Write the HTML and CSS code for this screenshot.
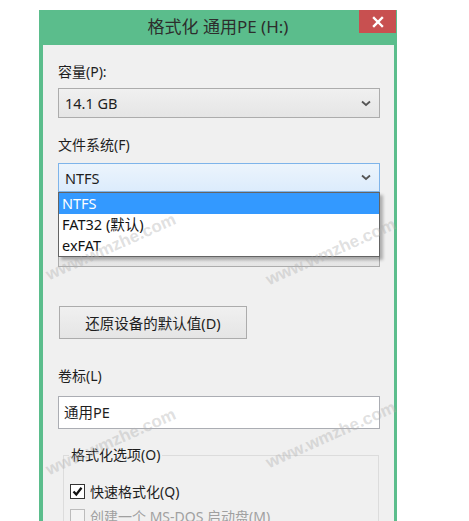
FILE: index.html
```html
<!DOCTYPE html>
<html lang="zh-CN">
<head>
<meta charset="utf-8">
<title>格式化 通用PE (H:)</title>
<link rel="stylesheet" href="styles.css">
</head>
<body>
<div class="window">
  <div class="titlebar">
    <div class="title">格式化 通用PE (H:)</div>
    <div class="close">
      <svg width="12" height="12" viewBox="0 0 12 12"><path d="M2 2 L10 10 M10 2 L2 10" stroke="#fff" stroke-width="2.4" stroke-linecap="square"/></svg>
    </div>
  </div>
  <div class="client">
    <div class="label lbl-cap">容量(P):</div>
    <div class="combo combo-cap"><span>14.1 GB</span>
      <svg class="chev" width="10" height="7" viewBox="0 0 10 7"><path d="M1 1.5 L5 5 L9 1.5" fill="none" stroke="#555" stroke-width="1.8"/></svg>
    </div>
    <div class="label lbl-fs">文件系统(F)</div>
    <div class="fs-wrap">
      <div class="combo focus"><span>NTFS</span>
        <svg class="chev" width="10" height="7" viewBox="0 0 10 7"><path d="M1 1.5 L5 5 L9 1.5" fill="none" stroke="#555" stroke-width="1.8"/></svg>
      </div>
      <ul class="dropdown">
        <li class="sel">NTFS</li>
        <li>FAT32 (默认)</li>
        <li>exFAT</li>
      </ul>
    </div>
    <div class="label lbl-au">分配单元大小(A)</div>
    <div class="combo combo-au"><span></span>
      <svg class="chev" width="10" height="7" viewBox="0 0 10 7"><path d="M1 1.5 L5 5 L9 1.5" fill="none" stroke="#555" stroke-width="1.8"/></svg>
    </div>
    <button class="btn">还原设备的默认值(D)</button>
    <div class="label lbl-vol">卷标(L)</div>
    <div class="input">通用PE</div>
    <fieldset class="group">
      <legend>格式化选项(O)</legend>
      <div class="check-row">
        <span class="box checked">
          <svg width="11" height="11" viewBox="0 0 11 11"><path d="M1.5 5.5 L4.3 8.5 L9.5 1.8" fill="none" stroke="#111" stroke-width="2.3"/></svg>
        </span>
        <span>快速格式化(Q)</span>
      </div>
      <div class="check-row disabled">
        <span class="box"></span>
        <span>创建一个 MS-DOS 启动盘(M)</span>
      </div>
    </fieldset>
  </div>
  <div class="wm wm1">www.wmzhe.com</div>
  <div class="wm wm2">www.wmzhe.com</div>
  <div class="wm wm3">www.wmzhe.com</div>
  <div class="wm wm4">www.wmzhe.com</div>
</div>
</body>
</html>
```

FILE: styles.css
```css
html, body {
  margin: 0;
  padding: 0;
  background: #ffffff;
  overflow: hidden;
}
body {
  font-family: "Noto Sans", "Noto Sans CJK SC", sans-serif;
  font-size: 14px;
  color: #1e1e1e;
}
.window {
  position: relative;
  margin: 10px 0 0 39px;
  width: 358px;
  height: 560px;
  background: #5bbd8c;
  display: flex;
  flex-direction: column;
}
.titlebar {
  height: 35px;
  display: flex;
  justify-content: center;
  position: relative;
}
.title {
  font-size: 17px;
  color: #2d2d2d;
  line-height: 34px;
}
.close {
  position: absolute;
  top: 0;
  right: 1px;
  width: 37px;
  height: 23px;
  background: #c85050;
  display: flex;
  align-items: center;
  justify-content: center;
}
.client {
  flex: 1;
  margin: 0 3px 0 4px;
  background: #f0f0f0;
  padding: 0 14px 0 15px;
  display: flex;
  flex-direction: column;
  align-items: stretch;
}
.label {
  height: 20px;
  line-height: 20px;
}
.lbl-cap { margin-top: 17px; }
.lbl-fs { margin-top: 17px; }
.lbl-au { margin-top: 17px; }
.lbl-vol { margin-top: 27px; }
.combo {
  margin-top: 6px;
  height: 30px;
  box-sizing: border-box;
  border: 1px solid #acacac;
  background: linear-gradient(#f0f0f0, #e5e5e5);
  display: flex;
  align-items: center;
  justify-content: space-between;
  padding: 0 8px 0 6px;
  font-size: 14.5px;
}
.fs-wrap {
  position: relative;
  margin-top: 8px;
}
.combo.focus {
  margin-top: 0;
  height: 29px;
  border-color: #7eb4ea;
  background: linear-gradient(#ecf4fc, #dcecfc);
}
.chev { display: block; }
.dropdown {
  position: absolute;
  left: 0;
  top: 29px;
  width: 322px;
  box-sizing: border-box;
  margin: 0;
  padding: 0;
  list-style: none;
  background: #ffffff;
  border: 1px solid #646464;
  box-shadow: 3px 3px 3px rgba(0,0,0,0.28);
  z-index: 2;
}
.dropdown li {
  height: 21px;
  line-height: 21px;
  padding-left: 3px;
  font-size: 14.5px;
  color: #111;
}
.dropdown li.sel {
  background: #3399ff;
  color: #ffffff;
}
.combo-au { margin-top: 8px; }
.btn {
  margin-top: 39px;
  width: 188px;
  height: 33px;
  align-self: flex-start;
  margin-left: 1px;
  border: 1px solid #acacac;
  background: linear-gradient(#f0f0f0, #e5e5e5);
  font-family: inherit;
  font-size: 14.5px;
  color: #1e1e1e;
  padding: 0;
}
.input {
  margin-top: 10px;
  height: 33px;
  box-sizing: border-box;
  border: 1px solid #abadb3;
  background: #ffffff;
  padding-left: 5px;
  line-height: 31px;
  font-size: 14.5px;
}
.group {
  margin: 16px 1px 0 5px;
  padding: 7px 0 0 6px;
  border: 1px solid #dcdcdc;
  height: 80px;
  min-width: 0;
}
.group legend {
  padding: 0 2px;
  margin-left: -1px;
  line-height: 20px;
  color: #1e1e1e;
}
.check-row {
  display: flex;
  align-items: center;
  gap: 5px;
  height: 22px;
  margin-top: 8px;
}
.check-row.disabled {
  margin-top: 3px;
  color: #a0a0a0;
}
.box {
  width: 13px;
  height: 13px;
  border: 1px solid #333;
  background: #fff;
  display: flex;
  align-items: center;
  justify-content: center;
}
.disabled .box {
  border-color: #bcbcbc;
  background: #f4f4f4;
}
.wm {
  position: absolute;
  font-family: "Liberation Sans", sans-serif;
  font-weight: bold;
  font-size: 17px;
  color: rgba(175, 175, 175, 0.4);
  transform: rotate(-24deg);
  transform-origin: left bottom;
  pointer-events: none;
  z-index: 5;
  white-space: nowrap;
}
.wm1 { left: 12px; top: 255px; }
.wm2 { left: 232px; top: 260px; }
.wm3 { left: 12px; top: 450px; }
.wm4 { left: 232px; top: 443px; }
```
